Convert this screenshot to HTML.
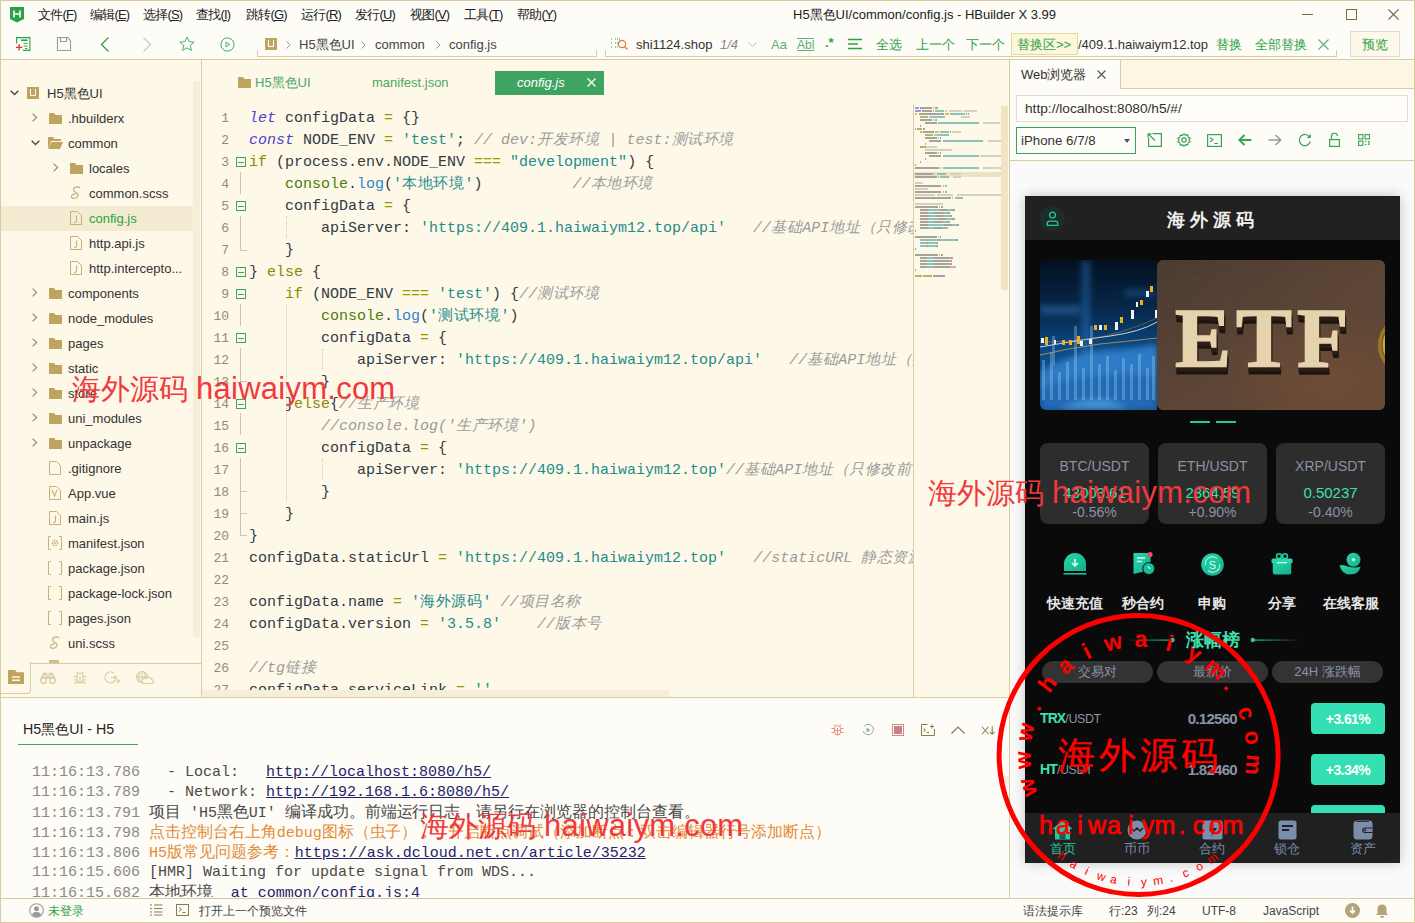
<!DOCTYPE html>
<html><head><meta charset="utf-8">
<style>
*{box-sizing:border-box;margin:0;padding:0}
html,body{width:1415px;height:923px;overflow:hidden}
body{position:relative;background:#fefcf6;font-family:"Liberation Sans",sans-serif;font-size:13px;color:#333}
.a{position:absolute}
.t{position:absolute;white-space:nowrap;line-height:1}
.mono{font-family:"Liberation Mono",monospace}
svg{position:absolute;overflow:visible}
.ln{position:absolute;left:0;width:27px;text-align:right;height:22px;line-height:22px;font-family:"Liberation Mono",monospace;font-size:13px;color:#958b7a;white-space:nowrap}
.cl{position:absolute;left:47px;height:22px;line-height:22px;font-family:"Liberation Mono",monospace;font-size:15px;white-space:pre;color:#333a45}
.z{letter-spacing:.6px}
.zc{font-size:16px;letter-spacing:-.05px}
.k{color:#4c45cf;font-style:italic}.i{color:#333a45}.o{color:#9a9a00}.s{color:#1f8c8c}.c{color:#9b9b9b;font-style:italic}.w{color:#8a8a00}.g{color:#4d7d0a}.b{color:#2d86cf}

</style></head><body>

<div class="a" style="left:0px;top:0px;width:1415px;height:923px;background:transparent;border:1px solid #d9cca2;z-index:60;pointer-events:none"></div>
<div id="menubar">
<svg style="left:9px;top:6px" width="16" height="17" viewBox="0 0 16 17"><path d="M1 1h14v12l-7 3.5L1 13z" fill="#2ba245"/><path d="M5 4.5v7M11 4.5v7M5 8h6" stroke="#fff" stroke-width="1.6" fill="none"/></svg>
<div class="t" style="left:38px;top:8px;color:#222;letter-spacing:-.8px">文件(<u>F</u>)</div>
<div class="t" style="left:90px;top:8px;color:#222;letter-spacing:-.8px">编辑(<u>E</u>)</div>
<div class="t" style="left:143px;top:8px;color:#222;letter-spacing:-.8px">选择(<u>S</u>)</div>
<div class="t" style="left:196px;top:8px;color:#222;letter-spacing:-.8px">查找(<u>I</u>)</div>
<div class="t" style="left:246px;top:8px;color:#222;letter-spacing:-.8px">跳转(<u>G</u>)</div>
<div class="t" style="left:301px;top:8px;color:#222;letter-spacing:-.8px">运行(<u>R</u>)</div>
<div class="t" style="left:355px;top:8px;color:#222;letter-spacing:-.8px">发行(<u>U</u>)</div>
<div class="t" style="left:410px;top:8px;color:#222;letter-spacing:-.8px">视图(<u>V</u>)</div>
<div class="t" style="left:464px;top:8px;color:#222;letter-spacing:-.8px">工具(<u>T</u>)</div>
<div class="t" style="left:517px;top:8px;color:#222;letter-spacing:-.8px">帮助(<u>Y</u>)</div>
<div class="t" style="left:793px;top:8px;color:#222">H5黑色UI/common/config.js - HBuilder X 3.99</div>
<div class="a" style="left:1302px;top:14px;width:11px;height:1px;background:#7a6a48"></div>
<div class="a" style="left:1346px;top:9px;width:11px;height:11px;border:1px solid #7a6a48"></div>
<svg style="left:1388px;top:9px" width="11" height="11"><path d="M0.5 0.5L10.5 10.5M10.5 0.5L0.5 10.5" stroke="#7a6a48" stroke-width="1.1"/></svg>
</div>


<div id="toolbar">
<!-- new file -->
<svg style="left:16px;top:37px" width="15" height="14" viewBox="0 0 15 14"><path d="M0.6 6.5V0.6H13.9V13.4H7" stroke="#2ba245" stroke-width="1.1" fill="none"/><path d="M5 3.2h6.5" stroke="#2ba245" stroke-width="1.6"/><path d="M7.5 6.3h4M7.5 9h4M9 11.5h2.5" stroke="#2ba245" stroke-width="1"/><path d="M0 10.3h6.2M3.1 7.2v6.4" stroke="#d9331f" stroke-width="1.3"/></svg>
<!-- save -->
<svg style="left:57px;top:37px" width="14" height="14" viewBox="0 0 14 14"><path d="M0.5 0.5h10l3 3v10h-13z" stroke="#9a9a9a" stroke-width="1.1" fill="none"/><path d="M3.5 0.5v4h6v-4" stroke="#9a9a9a" stroke-width="1.1" fill="none"/></svg>
<!-- back -->
<svg style="left:100px;top:37px" width="10" height="15"><path d="M8.5 0.5L1.5 7.5L8.5 14.5" stroke="#2ba245" stroke-width="1.3" fill="none"/></svg>
<!-- fwd -->
<svg style="left:142px;top:37px" width="10" height="15"><path d="M1.5 0.5L8.5 7.5L1.5 14.5" stroke="#c9c9c9" stroke-width="1.3" fill="none"/></svg>
<!-- star -->
<svg style="left:179px;top:36px" width="16" height="16" viewBox="0 0 16 16"><path d="M8 1l2.1 4.6 5 .5-3.8 3.4 1.1 4.9L8 11.9l-4.4 2.5 1.1-4.9L.9 6.1l5-.5z" stroke="#3aae62" stroke-width=".95" fill="none" stroke-linejoin="round"/></svg>
<!-- run -->
<svg style="left:220px;top:37px" width="15" height="15" viewBox="0 0 15 15"><circle cx="7.5" cy="7.5" r="6.6" stroke="#3aae62" stroke-width="1" fill="none"/><path d="M6 5v5l3.8-2.5z" stroke="#3aae62" stroke-width=".9" fill="none" stroke-linejoin="round"/></svg>
<!-- breadcrumb -->
<div class="a" style="left:257px;top:50px;width:1px;height:7px;background:#d9cca2"></div>
<div class="a" style="left:257px;top:56px;width:340px;height:1px;background:#d9cca2"></div>
<div class="a" style="left:596px;top:50px;width:1px;height:7px;background:#d9cca2"></div>
<div class="a" style="left:265px;top:38px;width:12px;height:12px;background:#bfa360"></div>
<div class="a" style="left:268px;top:40px;width:6px;height:7px;border:1.3px solid #fff;border-top:none"></div>
<svg style="left:286px;top:41px" width="5" height="8"><path d="M0.5 0.5L4 4L0.5 7.5" stroke="#999" fill="none"/></svg>
<div class="t" style="left:299px;top:38px;color:#444">H5黑色UI</div>
<svg style="left:361px;top:41px" width="5" height="8"><path d="M0.5 0.5L4 4L0.5 7.5" stroke="#999" fill="none"/></svg>
<div class="t" style="left:375px;top:38px;color:#444">common</div>
<svg style="left:436px;top:41px" width="5" height="8"><path d="M0.5 0.5L4 4L0.5 7.5" stroke="#999" fill="none"/></svg>
<div class="t" style="left:449px;top:38px;color:#444">config.js</div>
<!-- search box -->
<div class="a" style="left:605px;top:50px;width:1px;height:7px;background:#d9cca2"></div>
<div class="a" style="left:605px;top:56px;width:732px;height:1px;background:#d9cca2"></div>
<div class="a" style="left:1336px;top:50px;width:1px;height:7px;background:#d9cca2"></div>
<svg style="left:610px;top:37px" width="18" height="14" viewBox="0 0 18 14"><path d="M1 2h2M1 6h2M1 10h2M5 2h5M5 6h3M5 10h3" stroke="#2ba245" stroke-width="1.1" stroke-dasharray="1 1"/><circle cx="12" cy="7" r="3.6" stroke="#e07b3c" stroke-width="1.2" fill="none"/><path d="M14.5 9.5l3 3" stroke="#e07b3c" stroke-width="1.3"/></svg>
<div class="t" style="left:636px;top:38px;color:#333;font-size:13px">shi1124.shop</div>
<div class="t" style="left:720px;top:38px;color:#888;font-style:italic">1/4</div>
<svg style="left:748px;top:42px" width="9" height="6"><path d="M0.5 0.5L4.5 4.5L8.5 0.5" stroke="#bbb" fill="none"/></svg>
<div class="t" style="left:771px;top:38px;color:#5cb176;font-size:13px">Aa</div>
<div class="t" style="left:797px;top:38px;color:#5cb176;font-size:12px;text-decoration:underline;border-top:1px solid #5cb176">Abl</div>
<div class="t" style="left:825px;top:36px;color:#2ba245;font-size:13px;font-weight:bold">.*</div>
<svg style="left:848px;top:38px" width="14" height="12"><path d="M0 1.5h14M0 6h10M0 10.5h14" stroke="#2ba245" stroke-width="1.3"/></svg>
<div class="t" style="left:876px;top:38px;color:#2ba245">全选</div>
<div class="t" style="left:916px;top:38px;color:#2ba245">上一个</div>
<div class="t" style="left:966px;top:38px;color:#2ba245">下一个</div>
<div class="a" style="left:1011px;top:33px;width:67px;height:22px;background:#fbf6dc;border:1px solid #e3d99c"></div>
<div class="t" style="left:1017px;top:38px;color:#2ba245">替换区&gt;&gt;</div>
<div class="t" style="left:1078px;top:38px;color:#333">/409.1.haiwaiym12.top</div>
<div class="t" style="left:1216px;top:38px;color:#2ba245">替换</div>
<div class="t" style="left:1255px;top:38px;color:#2ba245">全部替换</div>
<svg style="left:1318px;top:39px" width="11" height="11"><path d="M0.5 0.5L10.5 10.5M10.5 0.5L0.5 10.5" stroke="#5cb176" stroke-width="1.2"/></svg>
<div class="a" style="left:1350px;top:31px;width:50px;height:26px;background:#fdf8e8;border:1px solid #dcdcdc"></div>
<div class="t" style="left:1362px;top:38px;color:#2ba245">预览</div>
</div>
<div class="a" style="left:0;top:59px;width:1415px;height:1px;background:#d9cca2"></div>


<div class="a" style="left:0px;top:59px;width:1415px;height:1px;background:#d9cca2;"></div>
<div class="a" style="left:0;top:60px;width:201px;height:637px;background:#fdf8e8;overflow:hidden">
<svg style="left:10px;top:30px" width="9" height="6"><path d="M0.7 0.7L4.5 4.5L8.3 0.7" stroke="#444" stroke-width="1.3" fill="none"/></svg>
<div class="a" style="left:27px;top:27px;width:12px;height:12px;background:#bfa360"></div><div class="a" style="left:30px;top:29px;width:6px;height:7px;border:1.3px solid #fdf8e8;border-top:none"></div>
<div class="t" style="left:47px;top:27px;color:#333">H5黑色UI</div>
<svg style="left:32px;top:53px" width="6" height="9"><path d="M0.6 0.6L4.6 4.5L0.6 8.4" stroke="#8a8a8a" stroke-width="1.2" fill="none"/></svg>
<svg style="left:49px;top:53px" width="13" height="11" viewBox="0 0 13 11"><path d="M0 0h5l1.5 2H13v9H0z" fill="#bfa360"/></svg>
<div class="t" style="left:68px;top:52px;color:#333">.hbuilderx</div>
<svg style="left:31px;top:80px" width="9" height="6"><path d="M0.7 0.7L4.5 4.5L8.3 0.7" stroke="#444" stroke-width="1.3" fill="none"/></svg>
<svg style="left:48px;top:77px" width="15" height="12" viewBox="0 0 15 12"><path d="M0 0h5l1.5 2H13v2H3L0 12z" fill="#bfa360"/><path d="M3.3 5H15l-3 7H0.3z" fill="#bfa360"/></svg>
<div class="t" style="left:68px;top:77px;color:#333">common</div>
<svg style="left:53px;top:103px" width="6" height="9"><path d="M0.6 0.6L4.6 4.5L0.6 8.4" stroke="#8a8a8a" stroke-width="1.2" fill="none"/></svg>
<svg style="left:70px;top:103px" width="13" height="11" viewBox="0 0 13 11"><path d="M0 0h5l1.5 2H13v9H0z" fill="#bfa360"/></svg>
<div class="t" style="left:89px;top:102px;color:#333">locales</div>
<svg style="left:70px;top:126px" width="12" height="14" viewBox="0 0 12 14"><path d="M10 2C8 0 3 1 3.5 4S9 6 8 9.5 2 13 1.5 11 4 7.5 6 8" stroke="#c6b07a" stroke-width="1.1" fill="none"/></svg>
<div class="t" style="left:89px;top:127px;color:#333">common.scss</div>
<div class="a" style="left:0;top:146px;width:193px;height:25px;background:#f3ecd3"></div>
<svg style="left:70px;top:151px" width="12" height="14" viewBox="0 0 12 14"><path d="M0.5 0.5h7l4 4v9h-11z" stroke="#c6b07a" fill="none"/><path d="M6.5 4.5v5.5q0 1.5-1.5 1.5h-1" stroke="#c6b07a" stroke-width="1.1" fill="none"/></svg>
<div class="t" style="left:89px;top:152px;color:#2ba245">config.js</div>
<svg style="left:70px;top:176px" width="12" height="14" viewBox="0 0 12 14"><path d="M0.5 0.5h7l4 4v9h-11z" stroke="#c6b07a" fill="none"/><path d="M6.5 4.5v5.5q0 1.5-1.5 1.5h-1" stroke="#c6b07a" stroke-width="1.1" fill="none"/></svg>
<div class="t" style="left:89px;top:177px;color:#333">http.api.js</div>
<svg style="left:70px;top:201px" width="12" height="14" viewBox="0 0 12 14"><path d="M0.5 0.5h7l4 4v9h-11z" stroke="#c6b07a" fill="none"/><path d="M6.5 4.5v5.5q0 1.5-1.5 1.5h-1" stroke="#c6b07a" stroke-width="1.1" fill="none"/></svg>
<div class="t" style="left:89px;top:202px;color:#333">http.intercepto...</div>
<svg style="left:32px;top:228px" width="6" height="9"><path d="M0.6 0.6L4.6 4.5L0.6 8.4" stroke="#8a8a8a" stroke-width="1.2" fill="none"/></svg>
<svg style="left:49px;top:228px" width="13" height="11" viewBox="0 0 13 11"><path d="M0 0h5l1.5 2H13v9H0z" fill="#bfa360"/></svg>
<div class="t" style="left:68px;top:227px;color:#333">components</div>
<svg style="left:32px;top:253px" width="6" height="9"><path d="M0.6 0.6L4.6 4.5L0.6 8.4" stroke="#8a8a8a" stroke-width="1.2" fill="none"/></svg>
<svg style="left:49px;top:253px" width="13" height="11" viewBox="0 0 13 11"><path d="M0 0h5l1.5 2H13v9H0z" fill="#bfa360"/></svg>
<div class="t" style="left:68px;top:252px;color:#333">node_modules</div>
<svg style="left:32px;top:278px" width="6" height="9"><path d="M0.6 0.6L4.6 4.5L0.6 8.4" stroke="#8a8a8a" stroke-width="1.2" fill="none"/></svg>
<svg style="left:49px;top:278px" width="13" height="11" viewBox="0 0 13 11"><path d="M0 0h5l1.5 2H13v9H0z" fill="#bfa360"/></svg>
<div class="t" style="left:68px;top:277px;color:#333">pages</div>
<svg style="left:32px;top:303px" width="6" height="9"><path d="M0.6 0.6L4.6 4.5L0.6 8.4" stroke="#8a8a8a" stroke-width="1.2" fill="none"/></svg>
<svg style="left:49px;top:303px" width="13" height="11" viewBox="0 0 13 11"><path d="M0 0h5l1.5 2H13v9H0z" fill="#bfa360"/></svg>
<div class="t" style="left:68px;top:302px;color:#333">static</div>
<svg style="left:32px;top:328px" width="6" height="9"><path d="M0.6 0.6L4.6 4.5L0.6 8.4" stroke="#8a8a8a" stroke-width="1.2" fill="none"/></svg>
<svg style="left:49px;top:328px" width="13" height="11" viewBox="0 0 13 11"><path d="M0 0h5l1.5 2H13v9H0z" fill="#bfa360"/></svg>
<div class="t" style="left:68px;top:327px;color:#333">store</div>
<svg style="left:32px;top:353px" width="6" height="9"><path d="M0.6 0.6L4.6 4.5L0.6 8.4" stroke="#8a8a8a" stroke-width="1.2" fill="none"/></svg>
<svg style="left:49px;top:353px" width="13" height="11" viewBox="0 0 13 11"><path d="M0 0h5l1.5 2H13v9H0z" fill="#bfa360"/></svg>
<div class="t" style="left:68px;top:352px;color:#333">uni_modules</div>
<svg style="left:32px;top:378px" width="6" height="9"><path d="M0.6 0.6L4.6 4.5L0.6 8.4" stroke="#8a8a8a" stroke-width="1.2" fill="none"/></svg>
<svg style="left:49px;top:378px" width="13" height="11" viewBox="0 0 13 11"><path d="M0 0h5l1.5 2H13v9H0z" fill="#bfa360"/></svg>
<div class="t" style="left:68px;top:377px;color:#333">unpackage</div>
<svg style="left:49px;top:401px" width="12" height="14" viewBox="0 0 12 14"><path d="M0.5 0.5h7l4 4v9h-11z" stroke="#c6b07a" fill="none"/></svg>
<div class="t" style="left:68px;top:402px;color:#333">.gitignore</div>
<svg style="left:49px;top:426px" width="12" height="14" viewBox="0 0 12 14"><path d="M0.5 0.5h7l4 4v9h-11z" stroke="#c6b07a" fill="none"/><path d="M3 4l2.5 6L8 4" stroke="#c6b07a" stroke-width="1.1" fill="none"/></svg>
<div class="t" style="left:68px;top:427px;color:#333">App.vue</div>
<svg style="left:49px;top:451px" width="12" height="14" viewBox="0 0 12 14"><path d="M0.5 0.5h7l4 4v9h-11z" stroke="#c6b07a" fill="none"/><path d="M6.5 4.5v5.5q0 1.5-1.5 1.5h-1" stroke="#c6b07a" stroke-width="1.1" fill="none"/></svg>
<div class="t" style="left:68px;top:452px;color:#333">main.js</div>
<svg style="left:48px;top:476px" width="14" height="14" viewBox="0 0 14 14"><path d="M3 0.5H0.5v13H3M11 0.5h2.5v13H11" stroke="#c6b07a" fill="none"/><circle cx="7" cy="7" r="2.6" fill="none" stroke="#c6b07a" stroke-width="1.6" stroke-dasharray="1.3 .9"/><circle cx="7" cy="7" r="1" fill="#c6b07a"/></svg>
<div class="t" style="left:68px;top:477px;color:#333">manifest.json</div>
<svg style="left:48px;top:501px" width="14" height="14" viewBox="0 0 14 14"><path d="M3 0.5H0.5v13H3M11 0.5h2.5v13H11" stroke="#c6b07a" fill="none"/></svg>
<div class="t" style="left:68px;top:502px;color:#333">package.json</div>
<svg style="left:48px;top:526px" width="14" height="14" viewBox="0 0 14 14"><path d="M3 0.5H0.5v13H3M11 0.5h2.5v13H11" stroke="#c6b07a" fill="none"/></svg>
<div class="t" style="left:68px;top:527px;color:#333">package-lock.json</div>
<svg style="left:48px;top:551px" width="14" height="14" viewBox="0 0 14 14"><path d="M3 0.5H0.5v13H3M11 0.5h2.5v13H11" stroke="#c6b07a" fill="none"/></svg>
<div class="t" style="left:68px;top:552px;color:#333">pages.json</div>
<svg style="left:49px;top:576px" width="12" height="14" viewBox="0 0 12 14"><path d="M10 2C8 0 3 1 3.5 4S9 6 8 9.5 2 13 1.5 11 4 7.5 6 8" stroke="#c6b07a" stroke-width="1.1" fill="none"/></svg>
<div class="t" style="left:68px;top:577px;color:#333">uni.scss</div>
<div class="a" style="left:49px;top:600px;width:10px;height:3px;background:#bfa360;opacity:.7"></div>

<div class="a" style="left:193px;top:21px;width:7px;height:556px;background:#f5eed8;"></div>
<div class="a" style="left:0;top:603px;width:201px;height:34px;background:#fdf8e8"></div>
<div class="a" style="left:31px;top:603px;width:170px;height:1px;background:#d9cca2"></div>
<div class="a" style="left:-1px;top:602px;width:32px;height:32px;border-right:1px solid #d9cca2;border-bottom:1px solid #d9cca2;border-bottom-right-radius:4px"></div>
<svg style="left:8px;top:610px" width="16" height="14" viewBox="0 0 16 14"><path d="M0 0h7l2 2.2h7V14H0z" fill="#bfa360"/><path d="M4 7h8M4 10.3h8" stroke="#fdf8e8" stroke-width="1.5"/></svg>
<svg style="left:40px;top:612px" width="16" height="12" viewBox="0 0 16 12"><circle cx="3.5" cy="8.5" r="2.8" stroke="#d8c9a0" stroke-width="1.3" fill="none"/><circle cx="12.5" cy="8.5" r="2.8" stroke="#d8c9a0" stroke-width="1.3" fill="none"/><path d="M1 7L3.5 1.5h3L7 5.5h2l.5-4h3L15 7" stroke="#d8c9a0" stroke-width="1.3" fill="#d8c9a0" fill-opacity=".4"/></svg>
<svg style="left:73px;top:611px" width="14" height="13" viewBox="0 0 14 13"><path d="M4 5a3 3 0 0 1 6 0v4a3 3 0 0 1-6 0z" stroke="#d8c9a0" stroke-width="1.1" fill="none"/><path d="M5 2.5L4 1M9 2.5L10 1M7 5v7M0.5 5.5h3.5M10 5.5h3.5M0.5 9h3.5M10 9h3.5M1.5 12.5L4 11M12.5 12.5L10 11" stroke="#d8c9a0" stroke-width="1.1"/></svg>
<svg style="left:104px;top:611px" width="16" height="13" viewBox="0 0 16 13"><path d="M10 2.2A5.5 5.5 0 1 0 10 10.8" stroke="#d8c9a0" stroke-width="1.1" fill="none"/><path d="M7 6.5h5.5M10.5 4.5l2 2-2 2M9 10h6.5M13.5 8l2 2-2 2" stroke="#d8c9a0" stroke-width="1.1" fill="none"/></svg>
<svg style="left:136px;top:611px" width="17" height="13" viewBox="0 0 17 13"><circle cx="6" cy="6" r="5.4" stroke="#d8c9a0" stroke-width="1.1" fill="none"/><path d="M0.6 6h10.8M6 0.6v10.8M3.5 1.5Q2 6 3.5 10.5M8.5 1.5Q10 6 8.5 10.5" stroke="#d8c9a0" stroke-width="1" fill="none"/><path d="M7.5 12.5h8a2 2 0 0 0 0-4 3 3 0 0 0-5.5-1 2.5 2.5 0 0 0-2.5 5z" fill="#fdf8e8" stroke="#d8c9a0" stroke-width="1.1"/></svg>

</div>
<div class="a" style="left:201px;top:60px;width:1px;height:637px;background:#d9cca2;"></div>
<div class="a" style="left:202px;top:60px;width:807px;height:637px;background:#fdf8e8;overflow:hidden">
<svg style="left:36px;top:17px" width="13" height="11" viewBox="0 0 13 11"><path d="M0 0h5l1.5 2H13v9H0z" fill="#bfa360"/></svg>
<div class="t" style="left:53px;top:16px;color:#4aa865">H5黑色UI</div>
<div class="t" style="left:170px;top:16px;color:#4aa865">manifest.json</div>
<div class="a" style="left:293px;top:11px;width:109px;height:24px;background:#3fa462;"></div>
<div class="t" style="left:315px;top:16px;color:#fff;font-style:italic">config.js</div>
<svg style="left:385px;top:18px" width="9" height="9"><path d="M0.5 0.5L8.5 8.5M8.5 0.5L0.5 8.5" stroke="#fff" stroke-width="1.2"/></svg>
<div class="a" style="left:0;top:0;width:711px;height:637px;overflow:hidden">
<div class="a" style="left:34px;top:97px;width:10px;height:10px;background:transparent;border:1px solid #3fa462"></div><div class="a" style="left:36px;top:102px;width:6px;height:1px;background:#3fa462;"></div>
<div class="a" style="left:34px;top:141px;width:10px;height:10px;background:transparent;border:1px solid #3fa462"></div><div class="a" style="left:36px;top:146px;width:6px;height:1px;background:#3fa462;"></div>
<div class="a" style="left:34px;top:207px;width:10px;height:10px;background:transparent;border:1px solid #3fa462"></div><div class="a" style="left:36px;top:212px;width:6px;height:1px;background:#3fa462;"></div>
<div class="a" style="left:34px;top:229px;width:10px;height:10px;background:transparent;border:1px solid #3fa462"></div><div class="a" style="left:36px;top:234px;width:6px;height:1px;background:#3fa462;"></div>
<div class="a" style="left:34px;top:273px;width:10px;height:10px;background:transparent;border:1px solid #3fa462"></div><div class="a" style="left:36px;top:278px;width:6px;height:1px;background:#3fa462;"></div>
<div class="a" style="left:34px;top:339px;width:10px;height:10px;background:transparent;border:1px solid #3fa462"></div><div class="a" style="left:36px;top:344px;width:6px;height:1px;background:#3fa462;"></div>
<div class="a" style="left:34px;top:383px;width:10px;height:10px;background:transparent;border:1px solid #3fa462"></div><div class="a" style="left:36px;top:388px;width:6px;height:1px;background:#3fa462;"></div>
<div class="a" style="left:38px;top:112px;width:1px;height:22px;background:#cdc6ae;"></div>
<div class="a" style="left:38px;top:156px;width:1px;height:34px;background:#cdc6ae;"></div>
<div class="a" style="left:38px;top:190px;width:7px;height:1px;background:#cdc6ae;"></div>
<div class="a" style="left:38px;top:244px;width:1px;height:22px;background:#cdc6ae;"></div>
<div class="a" style="left:38px;top:288px;width:1px;height:34px;background:#cdc6ae;"></div>
<div class="a" style="left:38px;top:321px;width:7px;height:1px;background:#cdc6ae;"></div>
<div class="a" style="left:38px;top:353px;width:1px;height:22px;background:#cdc6ae;"></div>
<div class="a" style="left:38px;top:398px;width:1px;height:78px;background:#cdc6ae;"></div>
<div class="a" style="left:38px;top:431px;width:7px;height:1px;background:#cdc6ae;"></div>
<div class="a" style="left:38px;top:453px;width:7px;height:1px;background:#cdc6ae;"></div>
<div class="a" style="left:38px;top:475px;width:7px;height:1px;background:#cdc6ae;"></div>
<div class="a" style="left:84px;top:156px;width:1px;height:22px;background:transparent;border-left:1px dotted #d2cab0"></div>
<div class="a" style="left:84px;top:244px;width:1px;height:197px;background:transparent;border-left:1px dotted #d2cab0"></div>
<div class="a" style="left:120px;top:289px;width:1px;height:20px;background:transparent;border-left:1px dotted #d2cab0"></div>
<div class="a" style="left:120px;top:399px;width:1px;height:20px;background:transparent;border-left:1px dotted #d2cab0"></div>
<div class="ln" style="top:48px">1</div>
<div class="cl" style="top:48px"><span class="k">let</span><span class="i"> configData </span><span class="o">=</span><span class="i"> {}</span></div>
<div class="ln" style="top:70px">2</div>
<div class="cl" style="top:70px"><span class="k">const</span><span class="i"> NODE_ENV </span><span class="o">=</span><span class="i"> </span><span class="s">&#x27;test&#x27;</span><span class="i">; </span><span class="c">// dev:<span class="z">开发环境</span> | test:<span class="z">测试环境</span></span></div>
<div class="ln" style="top:92px">3</div>
<div class="cl" style="top:92px"><span class="w">if</span><span class="i"> (process.env.NODE_ENV </span><span class="o">===</span><span class="i"> </span><span class="s">&quot;development&quot;</span><span class="i">) {</span></div>
<div class="ln" style="top:114px">4</div>
<div class="cl" style="top:114px"><span class="i">    </span><span class="g">console</span><span class="i">.</span><span class="b">log</span><span class="i">(</span><span class="s">&#x27;<span class="z">本地环境</span>&#x27;</span><span class="i">)          </span><span class="c">//<span class="z">本地环境</span></span></div>
<div class="ln" style="top:136px">5</div>
<div class="cl" style="top:136px"><span class="i">    configData </span><span class="o">=</span><span class="i"> {</span></div>
<div class="ln" style="top:158px">6</div>
<div class="cl" style="top:158px"><span class="i">        apiServer: </span><span class="s">&#x27;https://409.1.haiwaiym12.top/api&#x27;</span><span class="i">   </span><span class="c">//<span class="z">基础</span>API<span class="z">地址（只修改前面的</span></span></div>
<div class="ln" style="top:180px">7</div>
<div class="cl" style="top:180px"><span class="i">    }</span></div>
<div class="ln" style="top:202px">8</div>
<div class="cl" style="top:202px"><span class="i">} </span><span class="w">else</span><span class="i"> {</span></div>
<div class="ln" style="top:224px">9</div>
<div class="cl" style="top:224px"><span class="i">    </span><span class="w">if</span><span class="i"> (NODE_ENV </span><span class="o">===</span><span class="i"> </span><span class="s">&#x27;test&#x27;</span><span class="i">) {</span><span class="c">//<span class="z">测试环境</span></span></div>
<div class="ln" style="top:246px">10</div>
<div class="cl" style="top:246px"><span class="i">        </span><span class="g">console</span><span class="i">.</span><span class="b">log</span><span class="i">(</span><span class="s">&#x27;<span class="z">测试环境</span>&#x27;</span><span class="i">)</span></div>
<div class="ln" style="top:268px">11</div>
<div class="cl" style="top:268px"><span class="i">        configData </span><span class="o">=</span><span class="i"> {</span></div>
<div class="ln" style="top:290px">12</div>
<div class="cl" style="top:290px"><span class="i">            apiServer: </span><span class="s">&#x27;https://409.1.haiwaiym12.top/api&#x27;</span><span class="i">   </span><span class="c">//<span class="z">基础</span>API<span class="z">地址（只修改前面的</span></span></div>
<div class="ln" style="top:312px">13</div>
<div class="cl" style="top:312px"><span class="i">        }</span></div>
<div class="ln" style="top:334px">14</div>
<div class="cl" style="top:334px"><span class="i">    }</span><span class="w">else</span><span class="i">{</span><span class="c">//<span class="z">生产环境</span></span></div>
<div class="ln" style="top:356px">15</div>
<div class="cl" style="top:356px"><span class="i">        </span><span class="c">//console.log(&#x27;<span class="z">生产环境</span>&#x27;)</span></div>
<div class="ln" style="top:378px">16</div>
<div class="cl" style="top:378px"><span class="i">        configData </span><span class="o">=</span><span class="i"> {</span></div>
<div class="ln" style="top:400px">17</div>
<div class="cl" style="top:400px"><span class="i">            apiServer: </span><span class="s">&#x27;https://409.1.haiwaiym12.top&#x27;</span><span class="c">//<span class="z">基础</span>API<span class="z">地址（只修改前面的</span></span></div>
<div class="ln" style="top:422px">18</div>
<div class="cl" style="top:422px"><span class="i">        }</span></div>
<div class="ln" style="top:444px">19</div>
<div class="cl" style="top:444px"><span class="i">    }</span></div>
<div class="ln" style="top:466px">20</div>
<div class="cl" style="top:466px"><span class="i">}</span></div>
<div class="ln" style="top:488px">21</div>
<div class="cl" style="top:488px"><span class="i">configData.staticUrl </span><span class="o">=</span><span class="i"> </span><span class="s">&#x27;https://409.1.haiwaiym12.top&#x27;</span><span class="i">   </span><span class="c">//staticURL <span class="z">静态资源地址</span></span></div>
<div class="ln" style="top:510px">22</div>
<div class="cl" style="top:510px"></div>
<div class="ln" style="top:532px">23</div>
<div class="cl" style="top:532px"><span class="i">configData.name </span><span class="o">=</span><span class="i"> </span><span class="s">&#x27;<span class="z">海外源码</span>&#x27;</span><span class="i"> </span><span class="c">//<span class="z">项目名称</span></span></div>
<div class="ln" style="top:554px">24</div>
<div class="cl" style="top:554px"><span class="i">configData.version </span><span class="o">=</span><span class="i"> </span><span class="s">&#x27;3.5.8&#x27;</span><span class="i">    </span><span class="c">//<span class="z">版本号</span></span></div>
<div class="ln" style="top:576px">25</div>
<div class="cl" style="top:576px"></div>
<div class="ln" style="top:598px">26</div>
<div class="cl" style="top:598px"><span class="c">//tg<span class="z">链接</span></span></div>
<div class="ln" style="top:620px">27</div>
<div class="cl" style="top:620px"><span class="i">configData.serviceLink </span><span class="o">=</span><span class="i"> </span><span class="s">&#x27;&#x27;</span></div>

<div class="a" style="left:0px;top:630px;width:467px;height:7px;background:#f5eed8;"></div>
</div>
</div>
<div class="a" style="left:913px;top:105px;width:1px;height:592px;background:#d9cca2;"></div>
<div class="a" style="left:1001px;top:106px;width:7px;height:184px;background:#efe5c4;"></div>
<svg style="left:908px;top:100px" width="100" height="190" shape-rendering="crispEdges"><rect x="6" y="72" width="87" height="5" fill="#ebe2c3"/><rect x="7" y="7" width="4" height="2" fill="#9898dc"/><rect x="12" y="7" width="12" height="2" fill="#a5a39a"/><rect x="25" y="7" width="1" height="2" fill="#c9c55a"/><rect x="27" y="7" width="3" height="2" fill="#a5a39a"/><rect x="7" y="10" width="6" height="2" fill="#9898dc"/><rect x="14" y="10" width="10" height="2" fill="#a5a39a"/><rect x="25" y="10" width="1" height="2" fill="#c9c55a"/><rect x="27" y="10" width="9" height="2" fill="#8cc4bb"/><rect x="37" y="10" width="2" height="2" fill="#d3d0bf"/><rect x="41" y="10" width="12" height="2" fill="#d3d0bf"/><rect x="54" y="10" width="1" height="2" fill="#d3d0bf"/><rect x="56" y="10" width="13" height="2" fill="#d3d0bf"/><rect x="7" y="13" width="2" height="2" fill="#c9c55a"/><rect x="11" y="13" width="25" height="2" fill="#a5a39a"/><rect x="37" y="13" width="4" height="2" fill="#c9c55a"/><rect x="42" y="13" width="15" height="2" fill="#8cc4bb"/><rect x="58" y="13" width="1" height="2" fill="#a5a39a"/><rect x="60" y="13" width="1" height="2" fill="#a5a39a"/><rect x="12" y="16" width="8" height="2" fill="#aabb66"/><rect x="21" y="16" width="4" height="2" fill="#a3c3e3"/><rect x="25" y="16" width="12" height="2" fill="#8cc4bb"/><rect x="53" y="16" width="9" height="2" fill="#d3d0bf"/><rect x="12" y="19" width="12" height="2" fill="#a5a39a"/><rect x="25" y="19" width="1" height="2" fill="#c9c55a"/><rect x="27" y="19" width="2" height="2" fill="#a5a39a"/><rect x="17" y="22" width="12" height="2" fill="#a5a39a"/><rect x="30" y="22" width="41" height="2" fill="#8cc4bb"/><rect x="75" y="22" width="17" height="2" fill="#d3d0bf"/><rect x="12" y="25" width="1" height="2" fill="#a5a39a"/><rect x="7" y="28" width="1" height="2" fill="#a5a39a"/><rect x="9" y="28" width="5" height="2" fill="#aabb66"/><rect x="15" y="28" width="2" height="2" fill="#a5a39a"/><rect x="12" y="31" width="2" height="2" fill="#aabb66"/><rect x="15" y="31" width="11" height="2" fill="#a5a39a"/><rect x="27" y="31" width="4" height="2" fill="#c9c55a"/><rect x="32" y="31" width="9" height="2" fill="#8cc4bb"/><rect x="42" y="31" width="1" height="2" fill="#a5a39a"/><rect x="44" y="31" width="9" height="2" fill="#d3d0bf"/><rect x="17" y="34" width="8" height="2" fill="#aabb66"/><rect x="26" y="34" width="4" height="2" fill="#a3c3e3"/><rect x="30" y="34" width="11" height="2" fill="#8cc4bb"/><rect x="17" y="37" width="12" height="2" fill="#a5a39a"/><rect x="30" y="37" width="1" height="2" fill="#c9c55a"/><rect x="32" y="37" width="1" height="2" fill="#a5a39a"/><rect x="21" y="40" width="12" height="2" fill="#a5a39a"/><rect x="35" y="40" width="40" height="2" fill="#8cc4bb"/><rect x="80" y="40" width="13" height="2" fill="#d3d0bf"/><rect x="17" y="43" width="1" height="2" fill="#a5a39a"/><rect x="12" y="46" width="1" height="2" fill="#a5a39a"/><rect x="13" y="46" width="5" height="2" fill="#aabb66"/><rect x="18" y="46" width="11" height="2" fill="#d3d0bf"/><rect x="17" y="49" width="27" height="2" fill="#d3d0bf"/><rect x="17" y="52" width="12" height="2" fill="#a5a39a"/><rect x="30" y="52" width="1" height="2" fill="#c9c55a"/><rect x="32" y="52" width="1" height="2" fill="#a5a39a"/><rect x="21" y="55" width="12" height="2" fill="#a5a39a"/><rect x="35" y="55" width="36" height="2" fill="#8cc4bb"/><rect x="72" y="55" width="21" height="2" fill="#d3d0bf"/><rect x="17" y="58" width="1" height="2" fill="#a5a39a"/><rect x="12" y="61" width="1" height="2" fill="#a5a39a"/><rect x="7" y="64" width="1" height="2" fill="#a5a39a"/><rect x="7" y="67" width="24" height="2" fill="#a5a39a"/><rect x="32" y="67" width="1" height="2" fill="#c9c55a"/><rect x="35" y="67" width="36" height="2" fill="#8cc4bb"/><rect x="75" y="67" width="14" height="2" fill="#d3d0bf"/><rect x="90" y="67" width="3" height="2" fill="#d3d0bf"/><rect x="7" y="73" width="18" height="2" fill="#a5a39a"/><rect x="26" y="73" width="1" height="2" fill="#c9c55a"/><rect x="29" y="73" width="9" height="2" fill="#8cc4bb"/><rect x="43" y="73" width="10" height="2" fill="#d3d0bf"/><rect x="7" y="76" width="22" height="2" fill="#a5a39a"/><rect x="30" y="76" width="1" height="2" fill="#c9c55a"/><rect x="32" y="76" width="9" height="2" fill="#8cc4bb"/><rect x="45" y="76" width="8" height="2" fill="#d3d0bf"/><rect x="7" y="82" width="8" height="2" fill="#d3d0bf"/><rect x="7" y="85" width="26" height="2" fill="#a5a39a"/><rect x="35" y="85" width="1" height="2" fill="#c9c55a"/><rect x="37" y="85" width="2" height="2" fill="#8cc4bb"/><rect x="7" y="88" width="13" height="2" fill="#d3d0bf"/><rect x="7" y="91" width="26" height="2" fill="#a5a39a"/><rect x="35" y="91" width="1" height="2" fill="#c9c55a"/><rect x="37" y="91" width="2" height="2" fill="#8cc4bb"/><rect x="7" y="94" width="20" height="2" fill="#d3d0bf"/><rect x="29" y="94" width="16" height="2" fill="#d3d0bf"/><rect x="49" y="94" width="44" height="2" fill="#d3d0bf"/><rect x="7" y="97" width="36" height="2" fill="#a5a39a"/><rect x="44" y="97" width="1" height="2" fill="#c9c55a"/><rect x="47" y="97" width="8" height="2" fill="#8cc4bb"/><rect x="7" y="103" width="28" height="2" fill="#d3d0bf"/><rect x="7" y="106" width="23" height="2" fill="#a5a39a"/><rect x="31" y="106" width="1" height="2" fill="#c9c55a"/><rect x="33" y="106" width="2" height="2" fill="#a5a39a"/><rect x="12" y="109" width="8" height="2" fill="#a5a39a"/><rect x="20" y="109" width="11" height="2" fill="#8cc4bb"/><rect x="31" y="109" width="8" height="2" fill="#a5a39a"/><rect x="39" y="109" width="5" height="2" fill="#8cc4bb"/><rect x="44" y="109" width="3" height="2" fill="#a5a39a"/><rect x="12" y="112" width="8" height="2" fill="#a5a39a"/><rect x="20" y="112" width="6" height="2" fill="#8cc4bb"/><rect x="26" y="112" width="10" height="2" fill="#a5a39a"/><rect x="36" y="112" width="3" height="2" fill="#8cc4bb"/><rect x="39" y="112" width="3" height="2" fill="#a5a39a"/><rect x="12" y="115" width="8" height="2" fill="#a5a39a"/><rect x="20" y="115" width="8" height="2" fill="#8cc4bb"/><rect x="28" y="115" width="8" height="2" fill="#a5a39a"/><rect x="36" y="115" width="5" height="2" fill="#8cc4bb"/><rect x="41" y="115" width="3" height="2" fill="#a5a39a"/><rect x="12" y="118" width="8" height="2" fill="#a5a39a"/><rect x="20" y="118" width="10" height="2" fill="#8cc4bb"/><rect x="30" y="118" width="8" height="2" fill="#a5a39a"/><rect x="38" y="118" width="6" height="2" fill="#8cc4bb"/><rect x="44" y="118" width="3" height="2" fill="#a5a39a"/><rect x="12" y="121" width="8" height="2" fill="#a5a39a"/><rect x="20" y="121" width="6" height="2" fill="#8cc4bb"/><rect x="26" y="121" width="9" height="2" fill="#a5a39a"/><rect x="35" y="121" width="4" height="2" fill="#8cc4bb"/><rect x="39" y="121" width="3" height="2" fill="#a5a39a"/><rect x="12" y="124" width="8" height="2" fill="#a5a39a"/><rect x="20" y="124" width="16" height="2" fill="#8cc4bb"/><rect x="36" y="124" width="8" height="2" fill="#a5a39a"/><rect x="44" y="124" width="5" height="2" fill="#8cc4bb"/><rect x="49" y="124" width="2" height="2" fill="#a5a39a"/><rect x="12" y="127" width="8" height="2" fill="#a5a39a"/><rect x="20" y="127" width="6" height="2" fill="#8cc4bb"/><rect x="26" y="127" width="8" height="2" fill="#a5a39a"/><rect x="34" y="127" width="6" height="2" fill="#8cc4bb"/><rect x="7" y="130" width="1" height="2" fill="#a5a39a"/><rect x="7" y="136" width="22" height="2" fill="#a5a39a"/><rect x="30" y="136" width="1" height="2" fill="#c9c55a"/><rect x="32" y="136" width="1" height="2" fill="#a5a39a"/><rect x="12" y="139" width="7" height="2" fill="#8cc4bb"/><rect x="19" y="139" width="2" height="2" fill="#a5a39a"/><rect x="21" y="139" width="9" height="2" fill="#8cc4bb"/><rect x="30" y="139" width="2" height="2" fill="#a5a39a"/><rect x="32" y="139" width="6" height="2" fill="#8cc4bb"/><rect x="38" y="139" width="1" height="2" fill="#a5a39a"/><rect x="39" y="139" width="9" height="2" fill="#8cc4bb"/><rect x="48" y="139" width="2" height="2" fill="#a5a39a"/><rect x="12" y="142" width="6" height="2" fill="#8cc4bb"/><rect x="18" y="142" width="2" height="2" fill="#a5a39a"/><rect x="20" y="142" width="8" height="2" fill="#8cc4bb"/><rect x="28" y="142" width="2" height="2" fill="#a5a39a"/><rect x="12" y="145" width="6" height="2" fill="#8cc4bb"/><rect x="18" y="145" width="2" height="2" fill="#a5a39a"/><rect x="20" y="145" width="8" height="2" fill="#8cc4bb"/><rect x="28" y="145" width="2" height="2" fill="#a5a39a"/><rect x="7" y="148" width="1" height="2" fill="#a5a39a"/><rect x="7" y="154" width="23" height="2" fill="#a5a39a"/><rect x="31" y="154" width="1" height="2" fill="#c9c55a"/><rect x="33" y="154" width="2" height="2" fill="#a5a39a"/><rect x="12" y="157" width="7" height="2" fill="#a5a39a"/><rect x="19" y="157" width="7" height="2" fill="#8cc4bb"/><rect x="26" y="157" width="16" height="2" fill="#a5a39a"/><rect x="42" y="157" width="1" height="2" fill="#e8a0c8"/><rect x="43" y="157" width="2" height="2" fill="#a5a39a"/><rect x="12" y="160" width="7" height="2" fill="#a5a39a"/><rect x="19" y="160" width="6" height="2" fill="#8cc4bb"/><rect x="25" y="160" width="16" height="2" fill="#a5a39a"/><rect x="41" y="160" width="1" height="2" fill="#e8a0c8"/><rect x="42" y="160" width="2" height="2" fill="#a5a39a"/><rect x="12" y="163" width="7" height="2" fill="#a5a39a"/><rect x="19" y="163" width="6" height="2" fill="#8cc4bb"/><rect x="25" y="163" width="16" height="2" fill="#a5a39a"/><rect x="41" y="163" width="1" height="2" fill="#e8a0c8"/><rect x="42" y="163" width="2" height="2" fill="#a5a39a"/><rect x="12" y="166" width="7" height="2" fill="#a5a39a"/><rect x="19" y="166" width="7" height="2" fill="#8cc4bb"/><rect x="26" y="166" width="16" height="2" fill="#a5a39a"/><rect x="42" y="166" width="6" height="2" fill="#e8a0c8"/><rect x="7" y="169" width="1" height="2" fill="#a5a39a"/><rect x="7" y="175" width="7" height="2" fill="#aabb66"/><rect x="15" y="175" width="9" height="2" fill="#aabb66"/><rect x="25" y="175" width="12" height="2" fill="#a5a39a"/></svg>
<div class="a" style="left:1009px;top:60px;width:1px;height:838px;background:#d9cca2;"></div>
<div class="a" style="left:1010px;top:60px;width:405px;height:838px;background:#fefcf6;"></div>
<div class="a" style="left:1010px;top:60px;width:405px;height:28px;background:#fcf6e2;"></div>
<div class="a" style="left:1010px;top:88px;width:405px;height:1px;background:#d9cca2;"></div>
<div class="a" style="left:1010px;top:60px;width:111px;height:29px;background:#fefcf6;border-right:1px solid #d9cca2"></div>
<div class="t" style="left:1021px;top:68px;color:#333">Web浏览器</div>
<svg style="left:1097px;top:70px" width="9" height="9"><path d="M0.5 0.5L8.5 8.5M8.5 0.5L0.5 8.5" stroke="#555" stroke-width="1.1"/></svg>
<div class="a" style="left:1016px;top:95px;width:392px;height:27px;background:#fefdf9;border:1px solid #e0ddd0"></div>
<div class="t" style="left:1025px;top:102px;color:#333;font-size:13.7px">http://localhost:8080/h5/#/</div>
<div class="a" style="left:1016px;top:127px;width:120px;height:27px;background:#fefdf9;border:1px solid #35a455"></div>
<div class="t" style="left:1021px;top:134px;color:#333;font-size:13.3px">iPhone 6/7/8</div>
<svg style="left:1124px;top:139px" width="6" height="4"><path d="M0 0h6L3 4z" fill="#555"/></svg>
<svg style="left:1147px;top:133px" width="15" height="14" viewBox="0 0 15 14"><path d="M5.5 0.6H14.4V13.4H1.6V4.5" stroke="#35a455" stroke-width="1.2" fill="none"/><path d="M1 0.8L8 7.5M1 0.8h3.5M1 0.8v3.5" stroke="#35a455" stroke-width="1.2" fill="none"/></svg>
<svg style="left:1177px;top:133px" width="14" height="14" viewBox="0 0 14 14"><path d="M7 0.8l1.6 1.4 2.1-.3.5 2.1 1.9 1-1 1.9 1 1.9-1.9 1-.5 2.1-2.1-.3L7 13.2l-1.6-1.4-2.1.3-.5-2.1-1.9-1 1-1.9-1-1.9 1.9-1 .5-2.1 2.1.3z" stroke="#35a455" stroke-width="1.2" fill="none" stroke-linejoin="round"/><circle cx="7" cy="7" r="2.2" stroke="#35a455" stroke-width="1.2" fill="none"/></svg>
<svg style="left:1207px;top:134px" width="15" height="13" viewBox="0 0 15 13"><rect x="0.6" y="0.6" width="13.8" height="11.8" stroke="#35a455" stroke-width="1.2" fill="none"/><path d="M3 3.5l3 2.3-3 2.3M7.5 9.5h3.5" stroke="#35a455" stroke-width="1.1" fill="none"/></svg>
<svg style="left:1238px;top:134px" width="14" height="12" viewBox="0 0 14 12"><path d="M13.5 6H1.5M6.5 1L1.3 6l5.2 5" stroke="#35a455" stroke-width="1.8" fill="none"/></svg>
<svg style="left:1268px;top:134px" width="14" height="12" viewBox="0 0 14 12"><path d="M0.5 6H12.5M7.5 1l5.2 5-5.2 5" stroke="#999" stroke-width="1.6" fill="none"/></svg>
<svg style="left:1298px;top:133px" width="14" height="14" viewBox="0 0 14 14"><path d="M11.8 4.2A5.6 5.6 0 1 0 12.4 8.5" stroke="#35a455" stroke-width="1.2" fill="none"/><path d="M12.8 1v4h-4z" fill="#35a455"/></svg>
<svg style="left:1329px;top:133px" width="11" height="14" viewBox="0 0 11 14"><rect x="0.6" y="6.6" width="9.8" height="6.8" stroke="#35a455" stroke-width="1.2" fill="none"/><path d="M2.5 6.5V3.5a3 3 0 0 1 6 -0.5" stroke="#35a455" stroke-width="1.2" fill="none"/></svg>
<svg style="left:1358px;top:134px" width="12" height="12" viewBox="0 0 12 12"><rect x="0.6" y="0.6" width="4.3" height="4.3" stroke="#35a455" stroke-width="1.1" fill="none"/><rect x="7.1" y="0.6" width="4.3" height="4.3" stroke="#35a455" stroke-width="1.1" fill="none"/><rect x="0.6" y="7.1" width="4.3" height="4.3" stroke="#35a455" stroke-width="1.1" fill="none"/><path d="M7 7.5h1.5M10 7.5h1.5M7 10.5h1.5M10 10.5h1.5M11 8v2" stroke="#35a455" stroke-width="1.1"/></svg>
<div class="a" style="left:1010px;top:160px;width:405px;height:1px;background:#d9cca2;"></div>
<div class="a" style="left:1010px;top:161px;width:405px;height:737px;background:#fafafa;"></div>
<div class="a" style="left:1025px;top:196px;width:375px;height:667px;background:#0a0a0a;box-shadow:0 0 12px rgba(0,0,0,.22)"></div>
<div class="a" style="left:1025px;top:196px;width:375px;height:44px;background:#212121;"></div>
<svg style="left:1040px;top:206px" width="25" height="25" viewBox="0 0 25 25"><circle cx="12.5" cy="12.5" r="12.5" fill="#1d2d29"/><circle cx="12.5" cy="9" r="2.9" stroke="#2cc39f" stroke-width="1.3" fill="none"/><path d="M7.2 19.3v-1.6q0-2.6 2.6-2.6h5.4q2.6 0 2.6 2.6v1.6z" stroke="#2cc39f" stroke-width="1.3" fill="none" stroke-linejoin="round"/></svg>
<div class="a" style="left:1142.5px;top:207.0px;width:140px;height:26px;line-height:26px;text-align:center;white-space:nowrap;color:#eee;font-size:18px;font-weight:bold;letter-spacing:5px">海外源码</div>
<svg style="left:1040px;top:260px" width="345" height="150" viewBox="0 0 345 150">
<defs>
<clipPath id="bl"><path d="M6 0H117V150H6A6 6 0 0 1 0 144V6A6 6 0 0 1 6 0z"/></clipPath>
<clipPath id="br"><path d="M117 0H339A6 6 0 0 1 345 6V144A6 6 0 0 1 339 150H123A6 6 0 0 1 117 144V6A6 6 0 0 1 123 0z"/></clipPath>
<linearGradient id="gb" x1="0" y1="0" x2="0" y2="1"><stop offset="0" stop-color="#03101f"/><stop offset=".35" stop-color="#072a4e"/><stop offset=".6" stop-color="#0c4a86"/><stop offset="1" stop-color="#0e4a8a"/></linearGradient>
<linearGradient id="gr" x1="0" y1="0" x2="1" y2="1"><stop offset="0" stop-color="#3c2f29"/><stop offset=".5" stop-color="#533c2f"/><stop offset="1" stop-color="#5c402e"/></linearGradient><radialGradient id="grr" cx=".75" cy=".8" r=".5"><stop offset="0" stop-color="#8a5230" stop-opacity=".45"/><stop offset="1" stop-color="#8a5230" stop-opacity="0"/></radialGradient>
<filter id="bf" x="-20%" y="-20%" width="140%" height="140%"><feGaussianBlur stdDeviation="3"/></filter><filter id="nz"><feTurbulence type="fractalNoise" baseFrequency="0.9" numOctaves="2" seed="4"/><feColorMatrix values="0 0 0 0 0.16  0 0 0 0 0.1  0 0 0 0 0.06  0 0 0 .6 0"/><feComposite in2="SourceGraphic" operator="in"/></filter>
</defs>
<g clip-path="url(#bl)">
<rect width="117" height="150" fill="url(#gb)"/>
<g filter="url(#bf)">
<rect x="42" y="0" width="8" height="95" fill="#2f7ad0" opacity=".45"/>
<rect x="0" y="46" width="40" height="8" fill="#3a88d8" opacity=".45"/>
<rect x="85" y="30" width="30" height="6" fill="#2f7ad0" opacity=".4"/>
<path d="M0 112 Q30 92 70 90 Q100 88 117 84 V150 H0z" fill="#3a90e0" opacity=".7"/>
<path d="M0 128 Q50 108 117 116 V150 H0z" fill="#1a5fa8" opacity=".6"/>
<path d="M20 150 Q40 136 70 140 L90 150z" fill="#5aa8ea" opacity=".6"/>
</g>
<g fill="#9ed0f6" opacity=".35"><rect x="2" y="100" width="3" height="40"/><rect x="10" y="92" width="3" height="48"/><rect x="18" y="112" width="3" height="28"/><rect x="26" y="102" width="3" height="38"/><rect x="34" y="66" width="3" height="74"/><rect x="42" y="108" width="3" height="32"/><rect x="50" y="66" width="3" height="74"/><rect x="58" y="104" width="3" height="36"/><rect x="66" y="96" width="3" height="44"/><rect x="74" y="110" width="3" height="30"/><rect x="82" y="98" width="3" height="42"/><rect x="90" y="104" width="3" height="36"/><rect x="98" y="94" width="3" height="46"/><rect x="106" y="108" width="3" height="32"/><rect x="112" y="96" width="3" height="44"/><rect x="12" y="76" width="3" height="30"/></g>
<path d="M0 87 Q40 80 70 76 Q100 72 117 62" stroke="#dfe6ee" stroke-width=".9" fill="none"/>
<path d="M0 95 Q30 88 60 84 Q100 80 117 78" stroke="#c9a050" stroke-width=".8" fill="none"/>
<path d="M0 82 Q50 82 80 72 Q105 64 117 58" stroke="#c9a050" stroke-width=".6" fill="none" opacity=".7"/>
<g fill="#f0b020"><rect x="5" y="77" width="3" height="8"/><rect x="22" y="80" width="3" height="5"/><rect x="29" y="80" width="3" height="5"/><rect x="37" y="76" width="3" height="8"/><rect x="54" y="65" width="3" height="5"/><rect x="64" y="65" width="3" height="5"/><rect x="80" y="57" width="3" height="6"/><rect x="100" y="40" width="3" height="5"/><rect x="110" y="26" width="3" height="6"/></g>
<g fill="#f2f2f2"><rect x="1" y="78" width="3" height="5"/><rect x="14" y="80" width="2" height="4"/><rect x="40" y="81" width="3" height="5"/><rect x="49" y="79" width="3" height="5"/><rect x="59" y="65" width="3" height="5"/><rect x="75" y="62" width="3" height="8"/><rect x="91" y="50" width="3" height="9"/><rect x="96" y="42" width="2" height="5"/><rect x="106" y="31" width="3" height="6"/><rect x="115" y="50" width="2" height="8"/></g>
</g>
<g clip-path="url(#br)">
<rect x="117" width="228" height="150" fill="url(#gr)"/>
<rect x="117" width="228" height="150" fill="url(#grr)"/>
<rect x="117" width="228" height="150" filter="url(#nz)"/>
<circle cx="368" cy="85" r="30" fill="#9a7a2a"/><circle cx="368" cy="85" r="26" fill="#c9a444" stroke="#7a5a18" stroke-width="1.2"/>
<g font-family="Liberation Serif" font-weight="bold" font-size="84" letter-spacing="5">
<text x="136" y="114" fill="#1a120e" stroke="#1a120e" stroke-width="2" opacity=".95">ETF</text>
<text x="135.5" y="110.5" fill="#2a1e17" stroke="#2a1e17" stroke-width="2">ETF</text>
<text x="135" y="107" fill="#e6d3ae" stroke="#e6d3ae" stroke-width="1.5">ETF</text>
</g>
</g>
</g>
</svg>
<div class="a" style="left:1190px;top:421px;width:20px;height:2px;background:#2fc59c;"></div><div class="a" style="left:1216px;top:421px;width:20px;height:2px;background:#2fc59c;"></div>
<div class="a" style="left:1040px;top:443px;width:109px;height:81px;background:#2d2d2d;border-radius:8px"></div>
<div class="a" style="left:1040.0px;top:458.0px;width:109px;height:16px;line-height:16px;text-align:center;white-space:nowrap;color:#8a93a6;font-size:14px">BTC/USDT</div>
<div class="a" style="left:1040.0px;top:484.0px;width:109px;height:18px;line-height:18px;text-align:center;white-space:nowrap;color:#3ee0b0;font-size:15px">43003.61</div>
<div class="a" style="left:1040.0px;top:504.0px;width:109px;height:16px;line-height:16px;text-align:center;white-space:nowrap;color:#8a93a6;font-size:14px">-0.56%</div>
<div class="a" style="left:1158px;top:443px;width:109px;height:81px;background:#2d2d2d;border-radius:8px"></div>
<div class="a" style="left:1158.0px;top:458.0px;width:109px;height:16px;line-height:16px;text-align:center;white-space:nowrap;color:#8a93a6;font-size:14px">ETH/USDT</div>
<div class="a" style="left:1158.0px;top:484.0px;width:109px;height:18px;line-height:18px;text-align:center;white-space:nowrap;color:#3ee0b0;font-size:15px">2364.59</div>
<div class="a" style="left:1158.0px;top:504.0px;width:109px;height:16px;line-height:16px;text-align:center;white-space:nowrap;color:#8a93a6;font-size:14px">+0.90%</div>
<div class="a" style="left:1276px;top:443px;width:109px;height:81px;background:#2d2d2d;border-radius:8px"></div>
<div class="a" style="left:1276.0px;top:458.0px;width:109px;height:16px;line-height:16px;text-align:center;white-space:nowrap;color:#8a93a6;font-size:14px">XRP/USDT</div>
<div class="a" style="left:1276.0px;top:484.0px;width:109px;height:18px;line-height:18px;text-align:center;white-space:nowrap;color:#3ee0b0;font-size:15px">0.50237</div>
<div class="a" style="left:1276.0px;top:504.0px;width:109px;height:16px;line-height:16px;text-align:center;white-space:nowrap;color:#8a93a6;font-size:14px">-0.40%</div>
<svg style="left:1060px;top:550px" width="30" height="26" viewBox="0 0 30 26"><defs><linearGradient id="tg" x1="0" y1="0" x2="1" y2="1"><stop offset="0" stop-color="#2ad6ad"/><stop offset="1" stop-color="#13ae8a"/></linearGradient></defs>
<path d="M4 21A11 11 0 0 1 26 21z" transform="translate(0,0)" fill="url(#tg)"/><path d="M4 21V14A11 11 0 0 1 26 14V21z" fill="url(#tg)"/><rect x="3.5" y="23" width="23" height="1.6" fill="#1bbf98"/><path d="M15 9v7M12 13l3 3 3-3" stroke="#e8fff8" stroke-width="1.5" fill="none"/></svg>
<svg style="left:1130px;top:550px" width="26" height="26" viewBox="0 0 26 26"><path d="M3.5 3h17v17l-17 4z" fill="url(#tg)"/><path d="M7 8h8M7 11.5h5" stroke="#d8fff4" stroke-width="1.3"/><circle cx="18.8" cy="18.6" r="6" fill="#1bbd96" stroke="#0a0a0a" stroke-width="1"/><path d="M18 16.5l2 2.5" stroke="#e8fff8" stroke-width="1.2"/><circle cx="20" cy="4.5" r="2.6" fill="#e9506a"/></svg>
<svg style="left:1200px;top:552px" width="25" height="25" viewBox="0 0 25 25"><circle cx="12.5" cy="12.5" r="11.3" fill="url(#tg)"/><path d="M5.5 13A7 7 0 0 1 17 6.5M19.5 12A7 7 0 0 1 8 18.5" stroke="#a8f0dc" stroke-width="1.1" fill="none"/><text x="12.5" y="16.5" text-anchor="middle" font-family="Liberation Sans" font-size="11" fill="#d8fff4">S</text></svg>
<svg style="left:1271px;top:553px" width="22" height="22" viewBox="0 0 22 22"><circle cx="8" cy="3.2" r="2.4" stroke="#22c9a0" stroke-width="1.6" fill="none"/><circle cx="14" cy="3.2" r="2.4" stroke="#22c9a0" stroke-width="1.6" fill="none"/><rect x="0.5" y="5.6" width="21" height="5" rx="1.5" fill="#2ad6ad"/><rect x="1.8" y="9.5" width="18.4" height="12" rx="2" fill="url(#tg)"/><rect x="6" y="9" width="10" height="1.3" fill="#c8fff0"/></svg>
<svg style="left:1339px;top:552px" width="23" height="24" viewBox="0 0 23 24"><circle cx="14.5" cy="7.8" r="7" fill="url(#tg)"/><path d="M14.5 5.8l2 2-2 2-2-2z" fill="#d8fff4"/><path d="M0.5 13.5Q4 12 9 14.5Q15 16.5 21.5 14.8Q20 22.5 11 22.5Q3 22.5 0.5 13.5z" fill="url(#tg)"/></svg>
<div class="a" style="left:1034.5px;top:594.0px;width:80px;height:18px;line-height:18px;text-align:center;white-space:nowrap;color:#e6e6e6;font-size:14px;font-weight:bold">快速充值</div>
<div class="a" style="left:1103.0px;top:594.0px;width:80px;height:18px;line-height:18px;text-align:center;white-space:nowrap;color:#e6e6e6;font-size:14px;font-weight:bold">秒合约</div>
<div class="a" style="left:1172.0px;top:594.0px;width:80px;height:18px;line-height:18px;text-align:center;white-space:nowrap;color:#e6e6e6;font-size:14px;font-weight:bold">申购</div>
<div class="a" style="left:1241.5px;top:594.0px;width:80px;height:18px;line-height:18px;text-align:center;white-space:nowrap;color:#e6e6e6;font-size:14px;font-weight:bold">分享</div>
<div class="a" style="left:1310.5px;top:594.0px;width:80px;height:18px;line-height:18px;text-align:center;white-space:nowrap;color:#e6e6e6;font-size:14px;font-weight:bold">在线客服</div>
<svg style="left:1120px;top:634px" width="190" height="12" viewBox="0 0 190 12"><defs><linearGradient id="lg1" x1="0" x2="1"><stop offset="0" stop-color="#2fc59c" stop-opacity="0"/><stop offset="1" stop-color="#2fc59c"/></linearGradient><linearGradient id="lg2" x1="0" x2="1"><stop offset="0" stop-color="#2fc59c"/><stop offset="1" stop-color="#2fc59c" stop-opacity="0"/></linearGradient></defs>
<rect x="6" y="5.5" width="46" height="1.2" fill="url(#lg1)"/><circle cx="52.5" cy="6" r="2.2" fill="#2fc59c"/><circle cx="132.8" cy="6" r="2.2" fill="#2fc59c"/><rect x="133" y="5.5" width="48" height="1.2" fill="url(#lg2)"/></svg>
<div class="a" style="left:1172.5px;top:629.0px;width:80px;height:22px;line-height:22px;text-align:center;white-space:nowrap;color:#3ee0b0;font-size:18px;font-weight:bold">涨幅榜</div>
<div class="a" style="left:1042px;top:661px;width:111px;height:22px;background:#333333;border-radius:11px"></div>
<div class="a" style="left:1042.0px;top:661.0px;width:111px;height:22px;line-height:22px;text-align:center;white-space:nowrap;color:#8a93a6;font-size:13px">交易对</div>
<div class="a" style="left:1157px;top:661px;width:111px;height:22px;background:#333333;border-radius:11px"></div>
<div class="a" style="left:1157.0px;top:661.0px;width:111px;height:22px;line-height:22px;text-align:center;white-space:nowrap;color:#8a93a6;font-size:13px">最新价</div>
<div class="a" style="left:1272px;top:661px;width:111px;height:22px;background:#333333;border-radius:11px"></div>
<div class="a" style="left:1272.0px;top:661.0px;width:111px;height:22px;line-height:22px;text-align:center;white-space:nowrap;color:#8a93a6;font-size:13px">24H 涨跌幅</div>
<div class="t" style="left:1040px;top:711px;font-size:14px;font-weight:bold;color:#3ee0b0;letter-spacing:-0.9px">TRX<span style="color:#8a93a6;font-weight:normal;font-size:12.5px;letter-spacing:-0.4px">/USDT</span></div>
<div class="a" style="left:1150px;top:710px;width:87px;height:18px;line-height:18px;text-align:right;font-size:15px;font-weight:bold;color:#8a93a6;letter-spacing:-0.7px">0.12560</div>
<div class="a" style="left:1311px;top:703px;width:74px;height:31px;background:#33dfb3;border-radius:4px"></div>
<div class="a" style="left:1311.0px;top:709.0px;width:74px;height:20px;line-height:20px;text-align:center;white-space:nowrap;color:#fff;font-size:14px;font-weight:bold;letter-spacing:-0.6px">+3.61%</div>
<div class="t" style="left:1040px;top:762px;font-size:14px;font-weight:bold;color:#3ee0b0;letter-spacing:-0.9px">HT<span style="color:#8a93a6;font-weight:normal;font-size:12.5px;letter-spacing:-0.4px">/USDT</span></div>
<div class="a" style="left:1150px;top:761px;width:87px;height:18px;line-height:18px;text-align:right;font-size:15px;font-weight:bold;color:#8a93a6;letter-spacing:-0.7px">1.82460</div>
<div class="a" style="left:1311px;top:754px;width:74px;height:31px;background:#33dfb3;border-radius:4px"></div>
<div class="a" style="left:1311.0px;top:760.0px;width:74px;height:20px;line-height:20px;text-align:center;white-space:nowrap;color:#fff;font-size:14px;font-weight:bold;letter-spacing:-0.6px">+3.34%</div>
<div class="a" style="left:1311px;top:805px;width:74px;height:31px;background:#33dfb3;border-radius:4px"></div>
<div class="a" style="left:1025px;top:813px;width:375px;height:50px;background:#202020;"></div>
<svg style="left:1052px;top:820px" width="21" height="20" viewBox="0 0 21 20"><path d="M10.5 0.5L0.5 9H3V19.5H18V9H20.5z" fill="#2ec4a0"/><rect x="7.5" y="13" width="6" height="6.5" fill="#1a5c50"/></svg>
<svg style="left:1127px;top:820px" width="20" height="20" viewBox="0 0 20 20"><circle cx="10" cy="10" r="9.5" fill="#7a8eab"/><path d="M4 8l3 3 3-3 3 3 3-3" stroke="#202020" stroke-width="1.5" fill="none"/></svg>
<svg style="left:1202px;top:820px" width="21" height="20" viewBox="0 0 21 20"><rect x="0.5" y="0.5" width="20" height="19" rx="2" fill="#7a8eab"/><path d="M12 3l-5 8h4l-2 6 6-9h-4z" fill="#202020"/></svg>
<svg style="left:1278px;top:820px" width="19" height="20" viewBox="0 0 19 20"><rect x="0.5" y="0.5" width="18" height="19" rx="2.5" fill="#7a8eab"/><path d="M4 6h11M4 10h7" stroke="#202020" stroke-width="1.8"/></svg>
<svg style="left:1353px;top:820px" width="20" height="20" viewBox="0 0 20 20"><path d="M4 0.5H16A3.5 3.5 0 0 1 19.5 4V16A3.5 3.5 0 0 1 16 19.5H4A3.5 3.5 0 0 1 0.5 16V4A3.5 3.5 0 0 1 4 0.5z" fill="#7a8eab"/><path d="M3 1.5H16" stroke="#202020" stroke-width=".8"/><path d="M12 7.5H19.5V13H12A2.75 2.75 0 0 1 12 7.5z" fill="#202020"/><path d="M12.3 8.5H19.5V12H12.3A1.75 1.75 0 0 1 12.3 8.5z" fill="#7a8eab"/><circle cx="12.3" cy="10.25" r="1" fill="#202020"/></svg>
<div class="a" style="left:1032.7px;top:841.0px;width:60px;height:16px;line-height:16px;text-align:center;white-space:nowrap;color:#2ec4a0;font-size:13px">首页</div>
<div class="a" style="left:1107.2px;top:841.0px;width:60px;height:16px;line-height:16px;text-align:center;white-space:nowrap;color:#7a8eab;font-size:13px">币币</div>
<div class="a" style="left:1182.2px;top:841.0px;width:60px;height:16px;line-height:16px;text-align:center;white-space:nowrap;color:#7a8eab;font-size:13px">合约</div>
<div class="a" style="left:1257.2px;top:841.0px;width:60px;height:16px;line-height:16px;text-align:center;white-space:nowrap;color:#7a8eab;font-size:13px">锁仓</div>
<div class="a" style="left:1332.6px;top:841.0px;width:60px;height:16px;line-height:16px;text-align:center;white-space:nowrap;color:#7a8eab;font-size:13px">资产</div>
<div class="a" style="left:0px;top:697px;width:1009px;height:1px;background:#d9cca2;"></div>
<div class="a" style="left:1px;top:698px;width:1008px;height:200px;background:#fefcf6;"></div>
<div class="t" style="left:23px;top:722px;color:#222;font-size:14.2px">H5黑色UI - H5</div>
<div class="a" style="left:18px;top:744px;width:120px;height:1px;background:#3fa462;"></div>
<svg style="left:831px;top:723px" width="13" height="13" viewBox="0 0 13 13"><path d="M3.5 5.5A3 3 0 0 1 9.5 5.5V9A3 3 0 0 1 3.5 9z" stroke="#e8907e" stroke-width="1" fill="none"/><path d="M4.3 3.3L3 1.5M8.7 3.3L10 1.5M6.5 5v7M0.5 5.5h3M9.5 5.5h3M0.5 9.5h3M9.5 9.5h3M3.5 7.5h6" stroke="#e8907e" stroke-width="1" fill="none"/></svg>
<svg style="left:862px;top:724px" width="12" height="12" viewBox="0 0 12 12"><path d="M2 2.5A5.2 5.2 0 1 1 1.2 7" stroke="#8fb0a6" stroke-width="1" fill="none"/><path d="M4.6 3.6v4.8l3.8-2.4z" fill="#8fb0a6"/></svg>
<div class="a" style="left:892px;top:724px;width:12px;height:12px;background:transparent;border:1px solid #c98b8b"></div><div class="a" style="left:894px;top:726px;width:8px;height:8px;background:#c88080;"></div>
<svg style="left:921px;top:724px" width="14" height="12" viewBox="0 0 14 12"><path d="M6.5 0.5H0.5V11.5H13.5V5" stroke="#8a7a48" stroke-width="1" fill="none"/><path d="M2.5 4.5l2 1.5-2 1.5M5.5 8.5h2.5M11 0.5v4M9 2.5h4" stroke="#8a7a48" stroke-width="1" fill="none"/></svg>
<svg style="left:951px;top:726px" width="14" height="8" viewBox="0 0 14 8"><path d="M0.5 7.5L7 1l6.5 6.5" stroke="#8a7a48" stroke-width="1.2" fill="none"/></svg>
<svg style="left:981px;top:726px" width="15" height="9" viewBox="0 0 15 9" transform="scale(.93)"><path d="M0.5 0.5l7 8M7.5 0.5l-7 8M11.5 0v8.5M9 6l2.5 2.5L14 6" stroke="#8a7a48" stroke-width="1.1" fill="none"/></svg>
<div class="a" style="left:1px;top:698px;width:1000px;height:199px;overflow:hidden">
<div class="a" style="left:31px;top:65px;height:20px;line-height:20px;white-space:pre;font-family:'Liberation Mono',monospace;font-size:15px"><span style="color:#8a8a8a">11:16:13.786 </span><span style="color:#4a4a4a">  - Local:   </span><span style="color:#23236e;text-decoration:underline">http://localhost:8080/h5/</span></div>
<div class="a" style="left:31px;top:85px;height:20px;line-height:20px;white-space:pre;font-family:'Liberation Mono',monospace;font-size:15px"><span style="color:#8a8a8a">11:16:13.789 </span><span style="color:#4a4a4a">  - Network: </span><span style="color:#23236e;text-decoration:underline">http://192.168.1.6:8080/h5/</span></div>
<div class="a" style="left:31px;top:105px;height:20px;line-height:20px;white-space:pre;font-family:'Liberation Mono',monospace;font-size:15px"><span style="color:#8a8a8a">11:16:13.791 </span><span style="color:#4a4a4a"><span class="zc">项目</span> 'H5<span class="zc">黑色</span>UI' <span class="zc">编译成功。前端运行日志，请另行在浏览器的控制台查看。</span></span></div>
<div class="a" style="left:31px;top:125px;height:20px;line-height:20px;white-space:pre;font-family:'Liberation Mono',monospace;font-size:15px"><span style="color:#8a8a8a">11:16:13.798 </span><span style="color:#e28c3a"><span class="zc">点击控制台右上角</span>debug<span class="zc">图标（虫子）</span></span><span style="color:#e28c3a;font-size:16px;letter-spacing:15px">，</span><span style="color:#e28c3a"><span class="zc">开启断点调试（添加断点：双击编辑器行号添加断点）</span></span></div>
<div class="a" style="left:31px;top:145px;height:20px;line-height:20px;white-space:pre;font-family:'Liberation Mono',monospace;font-size:15px"><span style="color:#8a8a8a">11:16:13.806 </span><span style="color:#e28c3a">H5<span class="zc">版常见问题参考：</span></span><span style="color:#23236e;text-decoration:underline">https://ask.dcloud.net.cn/article/35232</span></div>
<div class="a" style="left:31px;top:165px;height:20px;line-height:20px;white-space:pre;font-family:'Liberation Mono',monospace;font-size:15px"><span style="color:#8a8a8a">11:16:15.606 </span><span style="color:#4a4a4a">[HMR] Waiting for update signal from WDS...</span></div>
<div class="a" style="left:31px;top:185px;height:20px;line-height:20px;white-space:pre;font-family:'Liberation Mono',monospace;font-size:15px"><span style="color:#8a8a8a">11:16:15.682 </span><span style="color:#4a4a4a"><span class="zc">本地环境</span>  </span><span style="color:#23236e;text-decoration:underline">at common/config.js:4</span></div>
</div>
<div class="a" style="left:1003px;top:776px;width:6px;height:12px;background:#f6f0dc;"></div>
<div class="a" style="left:0px;top:898px;width:1415px;height:1px;background:#d9cca2;"></div>
<div class="a" style="left:1px;top:899px;width:1413px;height:23px;background:#fefcf6;"></div>
<svg style="left:29px;top:903px" width="15" height="15" viewBox="0 0 15 15"><circle cx="7.5" cy="7.5" r="6.8" stroke="#9a9a9a" stroke-width="1.1" fill="none"/><circle cx="7.5" cy="5.8" r="2.5" fill="#9a9a9a"/><path d="M3 12.2Q3.5 9 7.5 9Q11.5 9 12 12.2A6.5 6.5 0 0 1 3 12.2z" fill="#9a9a9a"/></svg>
<div class="t" style="left:48px;top:905px;font-size:12px;color:#2ba245">未登录</div>
<svg style="left:150px;top:904px" width="13" height="12" viewBox="0 0 13 12"><path d="M0 1h2M0 4.5h2M0 8h2M0 11h2M4 1h8.5M4 4.5h8.5M4 8h8.5M4 11h8.5" stroke="#8a7a48" stroke-width="1"/></svg>
<svg style="left:176px;top:904px" width="13" height="12" viewBox="0 0 13 12"><rect x="0.5" y="0.5" width="12" height="11" stroke="#8a7a48" stroke-width="1" fill="none"/><path d="M3 3.5l2.5 2-2.5 2M6.5 8.5h3" stroke="#8a7a48" stroke-width="1" fill="none"/></svg>
<div class="t" style="left:199px;top:905px;font-size:12px;color:#444">打开上一个预览文件</div>
<div class="t" style="left:1023px;top:905px;font-size:12px;color:#444">语法提示库</div>
<div class="t" style="left:1109px;top:905px;font-size:12px;color:#444">行:23</div>
<div class="t" style="left:1147px;top:905px;font-size:12px;color:#444">列:24</div>
<div class="t" style="left:1202px;top:905px;font-size:12px;color:#444">UTF-8</div>
<div class="t" style="left:1263px;top:905px;font-size:12px;color:#444">JavaScript</div>
<svg style="left:1345px;top:903px" width="15" height="15" viewBox="0 0 15 15"><circle cx="7.5" cy="7.5" r="7.5" fill="#b3a27a"/><path d="M7.5 3.5v6M5 7.5l2.5 2.5L10 7.5" stroke="#fff" stroke-width="1.6" fill="none"/></svg>
<svg style="left:1375px;top:903px" width="14" height="15" viewBox="0 0 14 15"><path d="M7 1.5Q11.5 1.5 11.5 6.5V10l1.5 2H1L2.5 10V6.5Q2.5 1.5 7 1.5z" fill="#b3a27a"/><path d="M5 13a2 2 0 0 0 4 0z" fill="#b3a27a"/></svg>
<style>.wm{font-size:29px;color:#f2383d;z-index:40;line-height:34px;height:34px;letter-spacing:0px}</style>
<div class="t wm" style="left:72px;top:372px">海外源码 <span style="font-size:31px;letter-spacing:.25px">haiwaiym.com</span></div>
<div class="t wm" style="left:928px;top:476px">海外源码 <span style="font-size:31px;letter-spacing:.25px">haiwaiym.com</span></div>
<div class="t wm" style="left:420px;top:809px">海外源码 <span style="font-size:31px;letter-spacing:.25px">haiwaiym.com</span></div>
<svg style="left:0;top:0;z-index:41" width="1415" height="923" viewBox="0 0 1415 923"><circle cx="1138.6" cy="755" r="139.5" stroke="#ff0000" stroke-width="5" fill="none"/><text x="0" y="0" transform="translate(1034.9,785.3) rotate(253.7)" text-anchor="middle" font-family="Liberation Sans" font-weight="bold" font-size="23" fill="#ff0000">w</text><text x="0" y="0" transform="translate(1030.7,759.7) rotate(267.5)" text-anchor="middle" font-family="Liberation Sans" font-weight="bold" font-size="23" fill="#ff0000">w</text><text x="0" y="0" transform="translate(1032.8,733.5) rotate(281.5)" text-anchor="middle" font-family="Liberation Sans" font-weight="bold" font-size="23" fill="#ff0000">w</text><text x="0" y="0" transform="translate(1040.7,709.4) rotate(295.0)" text-anchor="middle" font-family="Liberation Sans" font-weight="bold" font-size="23" fill="#ff0000">.</text><text x="0" y="0" transform="translate(1053.6,688.4) rotate(308.1)" text-anchor="middle" font-family="Liberation Sans" font-weight="bold" font-size="23" fill="#ff0000">h</text><text x="0" y="0" transform="translate(1070.0,671.5) rotate(320.6)" text-anchor="middle" font-family="Liberation Sans" font-weight="bold" font-size="23" fill="#ff0000">a</text><text x="0" y="0" transform="translate(1090.2,658.4) rotate(333.4)" text-anchor="middle" font-family="Liberation Sans" font-weight="bold" font-size="23" fill="#ff0000">i</text><text x="0" y="0" transform="translate(1114.7,649.7) rotate(347.2)" text-anchor="middle" font-family="Liberation Sans" font-weight="bold" font-size="23" fill="#ff0000">w</text><text x="0" y="0" transform="translate(1140.9,647.0) rotate(361.2)" text-anchor="middle" font-family="Liberation Sans" font-weight="bold" font-size="23" fill="#ff0000">a</text><text x="0" y="0" transform="translate(1167.5,650.9) rotate(375.5)" text-anchor="middle" font-family="Liberation Sans" font-weight="bold" font-size="23" fill="#ff0000">i</text><text x="0" y="0" transform="translate(1190.6,660.4) rotate(388.8)" text-anchor="middle" font-family="Liberation Sans" font-weight="bold" font-size="23" fill="#ff0000">y</text><text x="0" y="0" transform="translate(1210.7,674.6) rotate(401.9)" text-anchor="middle" font-family="Liberation Sans" font-weight="bold" font-size="23" fill="#ff0000">m</text><text x="0" y="0" transform="translate(1224.4,689.4) rotate(412.6)" text-anchor="middle" font-family="Liberation Sans" font-weight="bold" font-size="23" fill="#ff0000">.</text><text x="0" y="0" transform="translate(1239.2,715.8) rotate(428.7)" text-anchor="middle" font-family="Liberation Sans" font-weight="bold" font-size="23" fill="#ff0000">c</text><text x="0" y="0" transform="translate(1245.4,738.7) rotate(441.3)" text-anchor="middle" font-family="Liberation Sans" font-weight="bold" font-size="23" fill="#ff0000">o</text><text x="0" y="0" transform="translate(1246.2,764.2) rotate(454.9)" text-anchor="middle" font-family="Liberation Sans" font-weight="bold" font-size="23" fill="#ff0000">m</text><text x="0" y="0" transform="translate(1059.4,859.3) rotate(37.2)" text-anchor="middle" font-family="Liberation Sans" font-size="12" fill="#ff0000">h</text><text x="0" y="0" transform="translate(1071.9,867.8) rotate(30.6)" text-anchor="middle" font-family="Liberation Sans" font-size="12" fill="#ff0000">a</text><text x="0" y="0" transform="translate(1085.3,874.7) rotate(24.0)" text-anchor="middle" font-family="Liberation Sans" font-size="12" fill="#ff0000">i</text><text x="0" y="0" transform="translate(1100.1,880.2) rotate(17.1)" text-anchor="middle" font-family="Liberation Sans" font-size="12" fill="#ff0000">w</text><text x="0" y="0" transform="translate(1112.9,883.5) rotate(11.3)" text-anchor="middle" font-family="Liberation Sans" font-size="12" fill="#ff0000">a</text><text x="0" y="0" transform="translate(1128.5,885.6) rotate(4.4)" text-anchor="middle" font-family="Liberation Sans" font-size="12" fill="#ff0000">i</text><text x="0" y="0" transform="translate(1144.1,885.9) rotate(-2.4)" text-anchor="middle" font-family="Liberation Sans" font-size="12" fill="#ff0000">y</text><text x="0" y="0" transform="translate(1158.6,884.5) rotate(-8.8)" text-anchor="middle" font-family="Liberation Sans" font-size="12" fill="#ff0000">m</text><text x="0" y="0" transform="translate(1171.8,881.7) rotate(-14.7)" text-anchor="middle" font-family="Liberation Sans" font-size="12" fill="#ff0000">.</text><text x="0" y="0" transform="translate(1187.0,876.7) rotate(-21.7)" text-anchor="middle" font-family="Liberation Sans" font-size="12" fill="#ff0000">c</text><text x="0" y="0" transform="translate(1201.3,870.0) rotate(-28.6)" text-anchor="middle" font-family="Liberation Sans" font-size="12" fill="#ff0000">o</text><text x="0" y="0" transform="translate(1214.7,861.6) rotate(-35.5)" text-anchor="middle" font-family="Liberation Sans" font-size="12" fill="#ff0000">m</text><text x="1140" y="768" text-anchor="middle" font-family="Liberation Serif" font-size="37" letter-spacing="4" fill="#ff0000" stroke="#ff0000" stroke-width=".4">海外源码</text><text x="1046.0" y="834" text-anchor="middle" font-family="Liberation Sans" font-size="25" fill="#ff0000" stroke="#ff0000" stroke-width=".7">h</text><text x="1063.0" y="834" text-anchor="middle" font-family="Liberation Sans" font-size="25" fill="#ff0000" stroke="#ff0000" stroke-width=".7">a</text><text x="1080.0" y="834" text-anchor="middle" font-family="Liberation Sans" font-size="25" fill="#ff0000" stroke="#ff0000" stroke-width=".7">i</text><text x="1097.0" y="834" text-anchor="middle" font-family="Liberation Sans" font-size="25" fill="#ff0000" stroke="#ff0000" stroke-width=".7">w</text><text x="1114.0" y="834" text-anchor="middle" font-family="Liberation Sans" font-size="25" fill="#ff0000" stroke="#ff0000" stroke-width=".7">a</text><text x="1131.0" y="834" text-anchor="middle" font-family="Liberation Sans" font-size="25" fill="#ff0000" stroke="#ff0000" stroke-width=".7">i</text><text x="1148.0" y="834" text-anchor="middle" font-family="Liberation Sans" font-size="25" fill="#ff0000" stroke="#ff0000" stroke-width=".7">y</text><text x="1165.0" y="834" text-anchor="middle" font-family="Liberation Sans" font-size="25" fill="#ff0000" stroke="#ff0000" stroke-width=".7">m</text><text x="1182.0" y="834" text-anchor="middle" font-family="Liberation Sans" font-size="25" fill="#ff0000" stroke="#ff0000" stroke-width=".7">.</text><text x="1199.0" y="834" text-anchor="middle" font-family="Liberation Sans" font-size="25" fill="#ff0000" stroke="#ff0000" stroke-width=".7">c</text><text x="1216.0" y="834" text-anchor="middle" font-family="Liberation Sans" font-size="25" fill="#ff0000" stroke="#ff0000" stroke-width=".7">o</text><text x="1233.0" y="834" text-anchor="middle" font-family="Liberation Sans" font-size="25" fill="#ff0000" stroke="#ff0000" stroke-width=".7">m</text></svg>
</body></html>
